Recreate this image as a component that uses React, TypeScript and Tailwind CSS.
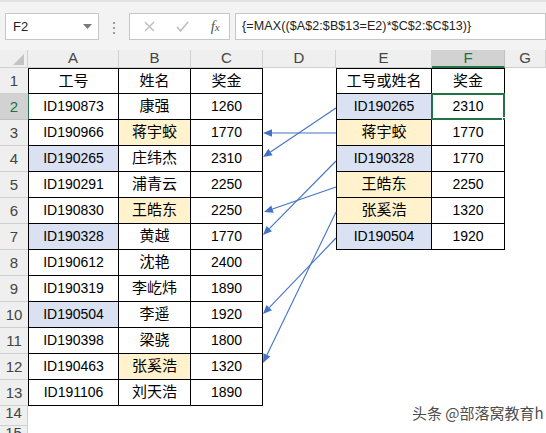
import React from "react";

const t1: string[][] = [
  ["工号", "姓名", "奖金"],
  ["ID190873", "康强", "1260"],
  ["ID190966", "蒋宇蛟", "1770"],
  ["ID190265", "庄纬杰", "2310"],
  ["ID190291", "浦青云", "2250"],
  ["ID190830", "王皓东", "2250"],
  ["ID190328", "黄越", "1770"],
  ["ID190612", "沈艳", "2400"],
  ["ID190319", "李屹炜", "1890"],
  ["ID190504", "李遥", "1920"],
  ["ID190398", "梁骁", "1800"],
  ["ID190463", "张奚浩", "1320"],
  ["ID191106", "刘天浩", "1890"],
];

const t2: string[][] = [
  ["工号或姓名", "奖金"],
  ["ID190265", "2310"],
  ["蒋宇蛟", "1770"],
  ["ID190328", "1770"],
  ["王皓东", "2250"],
  ["张奚浩", "1320"],
  ["ID190504", "1920"],
];

// row-col keys (A=0 ... F=5)
const fills: Record<string, "blue" | "yellow"> = {
  "4-0": "blue",
  "3-1": "yellow",
  "6-1": "yellow",
  "7-0": "blue",
  "10-0": "blue",
  "12-1": "yellow",
  "2-4": "blue",
  "3-4": "yellow",
  "4-4": "blue",
  "5-4": "yellow",
  "6-4": "yellow",
  "7-4": "blue",
};

const cols = ["A", "B", "C", "D", "E", "F", "G"];
const rows = Array.from({ length: 15 }, (_, i) => i + 1);

const isCjk = (s: string) => /[\u4e00-\u9fff]/.test(s);

const arrows = [
  [336, 108, 263, 157],
  [336, 133, 263, 133],
  [336, 161, 263, 235],
  [336, 187, 264, 212],
  [336, 212, 263, 363],
  [336, 238, 263, 314],
];

function Arrow({ x1, y1, x2, y2 }: { x1: number; y1: number; x2: number; y2: number }) {
  const dx = x2 - x1;
  const dy = y2 - y1;
  const len = Math.hypot(dx, dy);
  const ux = dx / len;
  const uy = dy / len;
  const L = 9;
  const W = 3.8;
  const bx = x2 - ux * L;
  const by = y2 - uy * L;
  const pts = `${x2},${y2} ${bx - uy * W},${by + ux * W} ${bx + uy * W},${by - ux * W}`;
  return (
    <g>
      <line x1={x1} y1={y1} x2={bx} y2={by} stroke="#4472c4" strokeWidth="1.1" />
      <polygon points={pts} fill="#4472c4" />
    </g>
  );
}

function Cell({ r, c }: { r: number; c: number }) {
  let text = "";
  let border = "";
  const inT1 = r <= 13 && c <= 2;
  const inT2 = r <= 7 && (c === 4 || c === 5);
  if (inT1) {
    text = t1[r - 1][c];
    if (c === 0 && r === 2) {
      border = "border-l border-r border-b border-l-[#217346] border-r-black border-b-black";
    } else if (c === 0) {
      border = r === 1 ? "border border-black" : "border-l border-r border-b border-black";
    } else {
      border = r === 1 ? "border-t border-r border-b border-black" : "border-r border-b border-black";
    }
  }
  if (inT2) {
    text = t2[r - 1][c - 4];
    if (c === 4) {
      border = r === 1 ? "border border-black" : "border-l border-r border-b border-black";
    } else {
      border = r === 1 ? "border-t border-r border-b border-black" : "border-r border-b border-black";
    }
  }
  const f = fills[`${r}-${c}`];
  const bg = f === "blue" ? "bg-[#d9e1f2]" : f === "yellow" ? "bg-[#fff2cc]" : "bg-white";
  const size = isCjk(text) ? "text-[15px]" : "text-[14px]";
  const selected = r === 2 && c === 5;
  return (
    <div className={`relative flex items-center justify-center text-black ${size} ${bg} ${border}`}>
      {text}
      {selected && (
        <>
          <div className="absolute -left-[1px] -top-[1px] -right-[1px] -bottom-[1px] border-2 border-[#217346]" />
          <div className="absolute -right-[4px] -bottom-[4px] w-[6px] h-[6px] bg-[#217346] border border-white" />
        </>
      )}
    </div>
  );
}

export default function App() {
  return (
    <div className="relative w-[546px] h-[433px] overflow-hidden bg-white font-['Liberation_Sans','Noto_Sans_CJK_SC',sans-serif]">
      {/* formula bar */}
      <div className="h-[50px] bg-[#f3f3f3] border-t-2 border-[#e2e2e2] flex items-start pt-[11px]">
        <div className="ml-[5px] w-[96px] h-[27px] bg-white border border-[#c6c6c6] flex items-center justify-between pl-[7px] pr-[6px]">
          <span className="text-[13px] text-[#222]">F2</span>
          <svg width="9" height="5" viewBox="0 0 9 5">
            <polygon points="0,0 9,0 4.5,5" fill="#7a7a7a" />
          </svg>
        </div>
        <div className="ml-[14px] mt-[9px] flex flex-col gap-[3px]">
          <span className="block w-[2px] h-[2px] bg-[#9a9a9a]" />
          <span className="block w-[2px] h-[2px] bg-[#9a9a9a]" />
          <span className="block w-[2px] h-[2px] bg-[#9a9a9a]" />
        </div>
        <div className="ml-[14px] w-[104px] h-[27px] bg-white border border-[#c6c6c6] flex items-center pl-[14px]">
          <svg width="11" height="11" viewBox="0 0 11 11">
            <path d="M1 1 L10 10 M10 1 L1 10" stroke="#bdbdbd" strokeWidth="1.4" />
          </svg>
          <svg className="ml-[21px]" width="13" height="11" viewBox="0 0 13 11">
            <path d="M1 6 L4.5 10 L12 1" stroke="#bdbdbd" strokeWidth="1.6" fill="none" />
          </svg>
          <span className="ml-[22px] font-['Liberation_Serif',serif] italic text-[15px] text-[#555] leading-none">
            f<span className="text-[11px]">x</span>
          </span>
        </div>
        <div className="ml-[5px] w-[320px] h-[27px] bg-white border border-[#c6c6c6] flex items-center pl-[6px]">
          <span className="text-[12.5px] text-[#222] tracking-[0.1px]">{"{=MAX(($A$2:$B$13=E2)*$C$2:$C$13)}"}</span>
        </div>
      </div>

      {/* sheet */}
      <div className="grid grid-cols-[28px_91px_72px_72px_73px_96px_73px_1fr] grid-rows-[18px_repeat(13,26px)_20px_20px]">
        <div className="relative bg-[#efefef] border-r border-b border-[#d0d0d0]">
          <svg className="absolute right-[3px] bottom-[2px]" width="11" height="11" viewBox="0 0 11 11">
            <polygon points="11,0 11,11 0,11" fill="#c4c4c4" />
          </svg>
        </div>
        {cols.map((c) =>
          c === "F" ? (
            <div
              key={c}
              className="flex items-center justify-center text-[15px] text-[#217346] bg-[#d2d2d2] border-r border-[#c0c0c0] border-b-2 border-b-[#217346]"
            >
              {c}
            </div>
          ) : (
            <div
              key={c}
              className="flex items-center justify-center text-[15px] text-[#444] bg-[#efefef] border-r border-b border-[#d0d0d0]"
            >
              {c}
            </div>
          )
        )}
        {rows.map((r) => (
          <React.Fragment key={r}>
            {r === 2 ? (
              <div className="flex items-end justify-center pb-[1px] text-[15px] text-[#217346] bg-[#d2d2d2] border-b border-[#c0c0c0]">
                {r}
              </div>
            ) : r <= 13 ? (
              <div className="flex items-end justify-center pb-[1px] text-[15px] text-[#444] bg-[#efefef] border-b border-[#d0d0d0]">
                {r}
              </div>
            ) : (
              <div className="flex items-end justify-center pb-[1px] text-[15px] text-[#444] bg-[#efefef] border-r border-b border-[#d0d0d0]">
                {r}
              </div>
            )}
            {cols.map((_, c) => (
              <Cell key={c} r={r} c={c} />
            ))}
          </React.Fragment>
        ))}
      </div>

      {/* connector arrows */}
      <svg className="absolute left-0 top-0 pointer-events-none" width="546" height="433" viewBox="0 0 546 433">
        {arrows.map(([x1, y1, x2, y2], i) => (
          <Arrow key={i} x1={x1} y1={y1} x2={x2} y2={y2} />
        ))}
      </svg>

      {/* watermark */}
      <div className="absolute left-[412px] top-[402px] text-[15px] text-[#4d4d4d] font-['Noto_Sans_CJK_SC',sans-serif] [text-shadow:0_0_2px_#fff]">
        头条 @部落窝教育h
      </div>
    </div>
  );
}
